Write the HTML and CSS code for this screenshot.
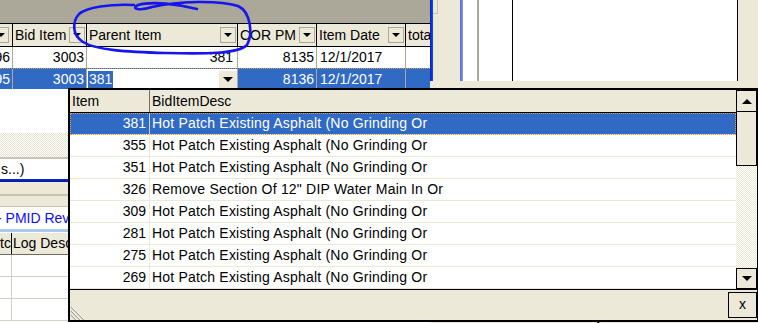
FILE: index.html
```html
<!DOCTYPE html>
<html lang="en">
<head>
    <meta charset="UTF-8">
    <title>Parent Item lookup</title>
    <link rel="stylesheet" href="styles.css">
</head>
<body>
<div class="screen">
    <div class="left">
        <div class="band"></div>
        <div class="grid-head">
            <div class="hcell first"><span class="ddbtn"></span></div>
            <div class="hcell"><span class="htext">Bid Item</span><span class="ddbtn"></span></div>
            <div class="hcell"><span class="htext">Parent Item</span><span class="ddbtn"></span></div>
            <div class="hcell"><span class="htext">COR PM</span><span class="ddbtn"></span></div>
            <div class="hcell"><span class="htext">Item Date</span><span class="ddbtn"></span></div>
            <div class="hcell last"><span class="htext">total</span></div>
        </div>
        <div class="grid-row">
            <div class="cell num first">96</div>
            <div class="cell num">3003</div>
            <div class="cell num wide">381</div>
            <div class="cell num">8135</div>
            <div class="cell">12/1/2017</div>
            <div class="cell last"></div>
        </div>
        <div class="grid-row sel">
            <div class="cell num first">95</div>
            <div class="cell num">3003</div>
            <div class="cell edit"><span class="hl">381</span><span class="editbtn"></span></div>
            <div class="cell num">8136</div>
            <div class="cell">12/1/2017</div>
            <div class="cell last"></div>
        </div>
        <div class="fill"></div>
        <div class="hatch"></div>
        <div class="rule"></div>
        <div class="note-row">s...)</div>
        <div class="blue-rule"></div>
        <div class="strip tall"></div>
        <div class="rule"></div>
        <div class="strip"></div>
        <div class="rule thin"></div>
        <div class="link-row">- PMID Revisions</div>
        <div class="light-rule"></div>
        <div class="sub-head">
            <div class="sub-cell">Etc</div>
            <div class="sub-cell">Log Description</div>
        </div>
        <div class="sub-row"><div class="sub-cell"></div><div class="sub-cell"></div></div>
        <div class="sub-row"><div class="sub-cell"></div><div class="sub-cell"></div></div>
        <div class="sub-row"><div class="sub-cell"></div><div class="sub-cell"></div></div>
    </div>

    <div class="right">
        <div class="strips">
            <div class="edge-blue"></div>
            <div class="side-beige"><span class="knob"></span></div>
            <div class="edge-lilac"></div>
            <div class="pane w14"></div>
            <div class="line-gray"></div>
            <div class="pane w33"></div>
            <div class="line-black"></div>
            <div class="pane w224"></div>
            <div class="line-black"></div>
            <div class="side-rest"></div>
        </div>
        <div class="right-low">
            <div class="low-note">Estimated Adjustment Amount</div>
        </div>
    </div>

    <div class="popup">
        <div class="pop-body">
            <div class="list">
                <div class="list-head">
                    <div class="lh">Item</div>
                    <div class="lh">BidItemDesc</div>
                </div>
                <div class="list-row sel"><div class="lc num">381</div><div class="lc">Hot Patch Existing Asphalt (No Grinding Or</div></div>
                <div class="list-row"><div class="lc num">355</div><div class="lc">Hot Patch Existing Asphalt (No Grinding Or</div></div>
                <div class="list-row"><div class="lc num">351</div><div class="lc">Hot Patch Existing Asphalt (No Grinding Or</div></div>
                <div class="list-row"><div class="lc num">326</div><div class="lc">Remove Section Of 12" DIP Water Main In Or</div></div>
                <div class="list-row"><div class="lc num">309</div><div class="lc">Hot Patch Existing Asphalt (No Grinding Or</div></div>
                <div class="list-row"><div class="lc num">281</div><div class="lc">Hot Patch Existing Asphalt (No Grinding Or</div></div>
                <div class="list-row"><div class="lc num">275</div><div class="lc">Hot Patch Existing Asphalt (No Grinding Or</div></div>
                <div class="list-row"><div class="lc num">269</div><div class="lc">Hot Patch Existing Asphalt (No Grinding Or</div></div>
            </div>
            <div class="vscroll">
                <div class="sbtn up"><span class="tri-up"></span></div>
                <div class="thumb"></div>
                <div class="track"></div>
                <div class="sbtn down"><span class="tri-down"></span></div>
            </div>
        </div>
        <div class="pop-foot">
            <svg class="grip" width="16" height="16" viewBox="0 0 16 16">
                <path d="M1 3 L14 16 M1 7 L10 16 M1 11 L6 16" stroke="#aca899" stroke-width="1.4" fill="none"/>
                <path d="M2 3 L15 16 M2 7 L11 16 M2 11 L7 16" stroke="#fff" stroke-width="0.8" fill="none"/>
            </svg>
            <div class="close">x</div>
        </div>
    </div>

    <svg class="ink" width="758" height="323" viewBox="0 0 758 323">
        <path d="M197 9 C178 4 152 1 138 5 C130 9 140 11 152 7 C178 1 218 0 238 6 C251 12 253 34 247 45 C238 54 204 54 166 53 C126 52 96 50 83 42 C72 35 72 22 79 14 C87 7 110 4 134 5"
              stroke="#1515f0" stroke-width="2.6" fill="none" stroke-linecap="round"/>
    </svg>
</div>
</body>
</html>
```

FILE: styles.css
```css
* {
    box-sizing: border-box;
}

body {
    margin: 0;
    font-family: "Liberation Sans", Arial, sans-serif;
    font-size: 14px;
    color: #000;
    background: #ece9d8;
}

.screen {
    position: relative;
    width: 758px;
    height: 323px;
    overflow: hidden;
    display: flex;
}

/* left pane: data grid and lower form */
.left {
    width: 430px;
    flex: none;
    display: flex;
    flex-direction: column;
    background: #fff;
    overflow: hidden;
}

.band {
    height: 23px;
    background: #aca899;
}

.grid-head,
.grid-row {
    display: grid;
    grid-template-columns: 13px 74px 151px 79px 89px 24px;
}

.grid-head {
    height: 24px;
    background: #ece9d8;
    border-top: 1px solid #000;
    border-bottom: 1px solid #000;
}

.hcell {
    display: flex;
    align-items: center;
    justify-content: space-between;
    border-right: 1px solid #000;
    padding: 0 1px 0 2px;
    overflow: hidden;
    white-space: nowrap;
}

.hcell.first {
    padding: 0;
    justify-content: flex-end;
}

.hcell.first .ddbtn {
    margin-right: 3px;
}

.hcell.last {
    border-right: none;
}

.ddbtn {
    flex: none;
    width: 16px;
    height: 16px;
    border: 1px solid #aca899;
    display: flex;
    align-items: center;
    justify-content: center;
}

.ddbtn::after {
    content: "";
    border-left: 4px solid transparent;
    border-right: 4px solid transparent;
    border-top: 4px solid #000;
}

.grid-row {
    height: 21px;
    line-height: 21px;
}

.cell {
    border-right: 1px solid #aca899;
    padding: 0 3px;
    overflow: hidden;
    white-space: nowrap;
}

.cell.num {
    text-align: right;
    padding: 0 2px 0 0;
}

.cell.num.wide {
    padding-right: 4px;
}

.cell.first {
    direction: rtl;
}

.cell.last {
    border-right: none;
}

.grid-row.sel {
    background: #316ac5;
    color: #fff;
    border-top: 1px dotted #c99a55;
    line-height: 20px;
}

.cell.edit {
    background: #fff;
    display: flex;
    align-items: center;
    justify-content: space-between;
    padding: 0 0 0 1px;
}

.hl {
    background: #316ac5;
    color: #fff;
    line-height: 17px;
    padding: 0 1px;
}

.editbtn {
    width: 18px;
    height: 17px;
    background: #ece9d8;
    display: flex;
    align-items: center;
    justify-content: center;
}

.editbtn::after {
    content: "";
    border-left: 5px solid transparent;
    border-right: 5px solid transparent;
    border-top: 5px solid #000;
}

.fill {
    height: 44px;
}

.hatch {
    height: 24px;
    background: repeating-conic-gradient(#e6e2d2 0 25%, #fff 0 50%) 0 0 / 2px 2px;
}

.rule {
    height: 2px;
    background: #c8c4b4;
}

.rule.thin {
    height: 1px;
}

.note-row {
    height: 20px;
    line-height: 20px;
    padding-left: 1px;
}

.blue-rule {
    height: 3px;
    background: linear-gradient(#0a2ad8, #0018a8);
}

.strip {
    height: 10px;
    background: #ece9d8;
}

.strip.tall {
    height: 12px;
}

.link-row {
    height: 22px;
    line-height: 22px;
    color: #1010f0;
    white-space: nowrap;
    margin-left: -3px;
}

.light-rule {
    height: 3px;
    background: #a9c7ef;
    margin-bottom: 1px;
}

.sub-head,
.sub-row {
    display: grid;
    grid-template-columns: 12px 1fr;
}

.sub-head {
    height: 22px;
    line-height: 21px;
    background: #ece9d8;
    border-bottom: 1px solid #6e6c62;
}

.sub-head .sub-cell {
    border-right: 1px solid #000;
    padding-left: 1px;
    overflow: hidden;
    white-space: nowrap;
}

.sub-head .sub-cell:first-child {
    direction: rtl;
    padding: 0;
}

.sub-row {
    height: 22px;
    border-bottom: 1px solid #d4d0c8;
}

.sub-row .sub-cell {
    border-right: 1px solid #d4d0c8;
}

/* right side panes */
.right {
    flex: 1;
    display: flex;
    flex-direction: column;
}

.strips {
    height: 89px;
    display: flex;
}

.edge-blue {
    width: 3px;
    background: linear-gradient(90deg, #0020b8, #1a46ff);
}

.side-beige {
    width: 27px;
    background: #ece9d8;
}

.knob {
    display: block;
    width: 5px;
    height: 14px;
    border-right: 1px solid #c8c4b4;
    border-bottom: 1px solid #c8c4b4;
}

.edge-lilac {
    width: 3px;
    background: linear-gradient(90deg, #5166dc, #8e9be6);
}

.pane {
    background: #fff;
}

.w14 { width: 14px; }
.w33 { width: 33px; }
.w224 { width: 224px; }

.line-gray {
    width: 2px;
    background: #aca899;
}

.line-black {
    width: 1px;
    background: #000;
}

.side-rest {
    flex: 1;
    background: #ece9d8;
}

.right-low {
    flex: 1;
    background: #ece9d8;
    padding: 226px 0 0 85px;
}

.low-note {
    line-height: 16px;
    white-space: nowrap;
}

/* lookup popup */
.popup {
    position: absolute;
    left: 68px;
    top: 88px;
    width: 690px;
    height: 234px;
    background: #ece9d8;
    border-left: 2px solid #000;
    border-top: 2px solid #000;
    border-bottom: 2px solid #000;
    border-right: 1px solid #000;
    display: flex;
    flex-direction: column;
    z-index: 2;
}

.pop-body {
    height: 199px;
    display: flex;
}

.list {
    width: 666px;
    background: #fff;
}

.list-head,
.list-row {
    display: grid;
    grid-template-columns: 80px 1fr;
}

.list-head {
    height: 23px;
    line-height: 22px;
    background: #ece9d8;
    border-bottom: 1px solid #000;
}

.lh {
    padding-left: 2px;
}

.lh:first-child {
    border-right: 1px solid #716f64;
}

.list-row {
    height: 22px;
    line-height: 21px;
    border-bottom: 1px solid #ece9d8;
    letter-spacing: 0.2px;
}

.lc {
    padding-left: 2px;
    white-space: nowrap;
}

.lc.num {
    text-align: right;
    padding: 0 3px 0 0;
    border-right: 1px solid #ece9d8;
    letter-spacing: 0;
}

.list-row.sel {
    background: #316ac5;
    color: #fff;
    outline: 1px dotted #d8a050;
    outline-offset: -1px;
}

.list-row.sel .lc.num {
    border-right-color: #c8d6f0;
}

.vscroll {
    width: 21px;
    display: flex;
    flex-direction: column;
}

.sbtn {
    background: #ece9d8;
    border: 1px solid #000;
    display: flex;
    align-items: center;
    justify-content: center;
}

.sbtn.up {
    height: 22px;
}

.sbtn.down {
    height: 21px;
}

.tri-up {
    border-left: 5px solid transparent;
    border-right: 5px solid transparent;
    border-bottom: 5px solid #000;
}

.tri-down {
    border-left: 5px solid transparent;
    border-right: 5px solid transparent;
    border-top: 5px solid #000;
}

.thumb {
    height: 54px;
    background: #ece9d8;
    border: 1px solid #000;
    border-top: none;
}

.track {
    flex: 1;
    background: repeating-conic-gradient(#ece9d8 0 25%, #fff 0 50%) 0 0 / 2px 2px;
}

.pop-foot {
    flex: 1;
    border-top: 1px solid #000;
    display: flex;
    align-items: flex-start;
    justify-content: space-between;
}

.grip {
    align-self: flex-end;
    margin-left: 0;
}

.close {
    width: 29px;
    height: 26px;
    margin: 2px 0 0 0;
    border: 1px solid #000;
    text-align: center;
    line-height: 23px;
    font-size: 14px;
}

.ink {
    position: absolute;
    left: 0;
    top: 0;
    pointer-events: none;
    z-index: 3;
}
```
